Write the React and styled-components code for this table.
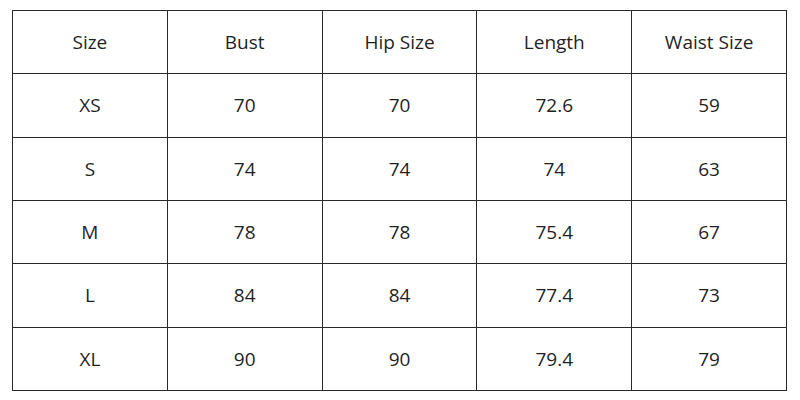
import styled, { createGlobalStyle } from 'styled-components';

const GlobalStyle = createGlobalStyle`
    html, body {
        margin: 0;
        padding: 0;
        background: #fff;
    }
`;

const columns = ['Size', 'Bust', 'Hip Size', 'Length', 'Waist Size'];

const rows = [
    ['XS', '70', '70', '72.6', '59'],
    ['S', '74', '74', '74', '63'],
    ['M', '78', '78', '75.4', '67'],
    ['L', '84', '84', '77.4', '73'],
    ['XL', '90', '90', '79.4', '79'],
];

const App = () => {
    return (
        <Wrapper>
            <GlobalStyle />
            <Table>
                <thead>
                    <tr>
                        {columns.map((label) => (
                            <Cell as="th" key={label}>
                                {label}
                            </Cell>
                        ))}
                    </tr>
                </thead>
                <tbody>
                    {rows.map((row) => (
                        <tr key={row[0]}>
                            {row.map((value, i) => (
                                <Cell key={i}>{value}</Cell>
                            ))}
                        </tr>
                    ))}
                </tbody>
            </Table>
        </Wrapper>
    );
};

export default App;

const Wrapper = styled.div`
    width: 800px;
    height: 400px;
    padding: 10px 0 0 12px;
    box-sizing: border-box;
    background: #fff;
`;

const Table = styled.table`
    border-collapse: collapse;
    width: 775px;
    table-layout: fixed;
    font-family: 'Open Sans', 'Noto Sans', sans-serif;
    font-size: 19px;
    color: #1f1f1f;
`;

const Cell = styled.td`
    height: 62.33px;
    padding: 0;
    border: 1px solid #2a2a2a;
    text-align: center;
    vertical-align: middle;
    font-weight: 400;
`;
